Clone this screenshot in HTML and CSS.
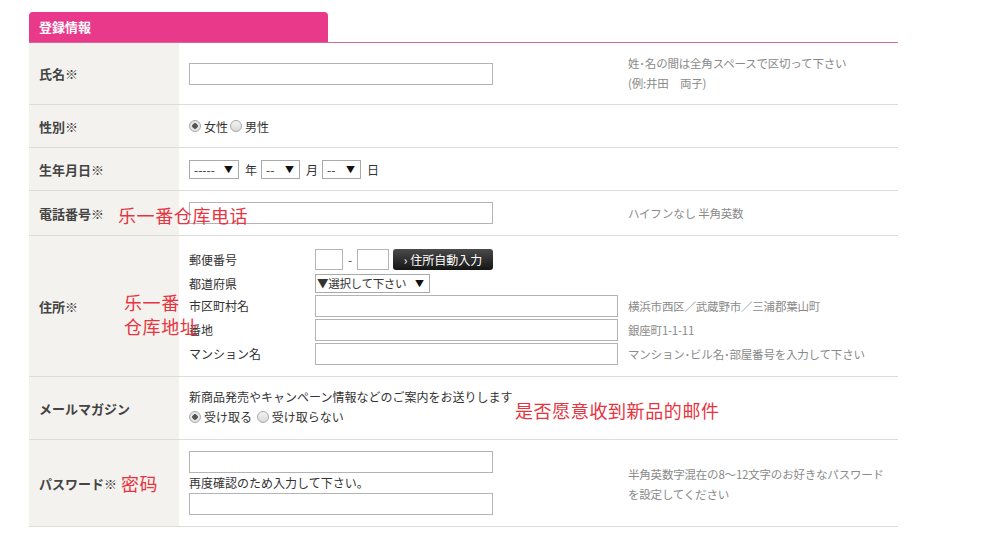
FILE: index.html
```html
<!DOCTYPE html>
<html lang="ja">

<head>
    <meta charset="UTF-8">
    <title>登録情報</title>
    <link rel="stylesheet" href="styles.css">
</head>

<body>
    <div class="form-box">
        <div class="form-head">
            <div class="form-tab">登録情報</div>
        </div>

        <div class="row row-name">
            <div class="label">氏名※</div>
            <div class="field"><input type="text" class="txt"></div>
            <div class="note">姓･名の間は全角スペースで区切って下さい<br>(例:井田　両子)</div>
        </div>

        <div class="row row-sex">
            <div class="label">性別※</div>
            <div class="field">
                <label class="radio"><input type="radio" name="sex" checked>女性</label>
                <label class="radio"><input type="radio" name="sex">男性</label>
            </div>
            <div class="note"></div>
        </div>

        <div class="row row-birth">
            <div class="label">生年月日※</div>
            <div class="field">
                <span class="sel sel-year"><select><option>-----</option></select></span>
                <span class="unit">年</span>
                <span class="sel sel-md"><select><option>--</option></select></span>
                <span class="unit">月</span>
                <span class="sel sel-md"><select><option>--</option></select></span>
                <span class="unit">日</span>
            </div>
            <div class="note"></div>
        </div>

        <div class="row row-tel">
            <div class="label">電話番号※</div>
            <div class="field"><input type="text" class="txt"></div>
            <div class="note">ハイフンなし 半角英数</div>
            <div class="memo memo-tel">乐一番仓库电话</div>
        </div>

        <div class="row row-addr">
            <div class="label">住所※</div>
            <div class="addr">
                <div class="addr-line line-zip">
                    <div class="addr-label">郵便番号</div>
                    <div class="addr-field">
                        <input type="text" class="txt zip1">
                        <span class="dash">-</span>
                        <input type="text" class="txt zip2">
                        <button class="auto-btn">› 住所自動入力</button>
                    </div>
                    <div class="note"></div>
                </div>
                <div class="addr-line line-pref">
                    <div class="addr-label">都道府県</div>
                    <div class="addr-field">
                        <span class="sel sel-pref"><select><option>▼選択して下さい</option></select></span>
                    </div>
                    <div class="note"></div>
                </div>
                <div class="addr-line">
                    <div class="addr-label">市区町村名</div>
                    <div class="addr-field"><input type="text" class="txt"></div>
                    <div class="note">横浜市西区／武蔵野市／三浦郡葉山町</div>
                </div>
                <div class="addr-line">
                    <div class="addr-label">番地</div>
                    <div class="addr-field"><input type="text" class="txt"></div>
                    <div class="note">銀座町1-1-11</div>
                </div>
                <div class="addr-line">
                    <div class="addr-label">マンション名</div>
                    <div class="addr-field"><input type="text" class="txt"></div>
                    <div class="note">マンション･ビル名･部屋番号を入力して下さい</div>
                </div>
            </div>
            <div class="memo memo-addr">乐一番<br>仓库地址</div>
        </div>

        <div class="row row-mail">
            <div class="label">メールマガジン</div>
            <div class="field field-stack">
                <div>新商品発売やキャンペーン情報などのご案内をお送りします</div>
                <div>
                    <label class="radio"><input type="radio" name="mail" checked>受け取る</label>
                    <label class="radio"><input type="radio" name="mail">受け取らない</label>
                </div>
            </div>
            <div class="note"></div>
            <div class="memo memo-mail">是否愿意收到新品的邮件</div>
        </div>

        <div class="row row-pass">
            <div class="label">パスワード※<span class="memo-inline">密码</span></div>
            <div class="field field-stack">
                <input type="password" class="txt">
                <div class="again">再度確認のため入力して下さい。</div>
                <input type="password" class="txt">
            </div>
            <div class="note">半角英数字混在の8～12文字のお好きなパスワード<br>を設定してください</div>
        </div>
    </div>
</body>

</html>
```

FILE: styles.css
```css
html,
body {
    margin: 0;
    background-color: #fff;
}

body {
    font-family: "Noto Sans CJK JP", "Noto Sans", sans-serif;
    font-size: 12px;
    color: #333;
    padding: 12px 0 0 29px;
}

.form-box {
    width: 869px;
}

.form-head {
    border-bottom: 1px solid #d9669b;
}

.form-tab {
    width: 289px;
    height: 30px;
    padding-left: 10px;
    background-color: #e9398b;
    border-radius: 4px 4px 0 0;
    color: #fff;
    font-weight: bold;
    font-size: 13px;
    line-height: 30px;
}

.row {
    position: relative;
    display: grid;
    grid-template-columns: 150px 449px 1fr;
    border-bottom: 1px solid #dcdcdc;
}

.label {
    background-color: #f3f2ee;
    padding-left: 10px;
    font-weight: bold;
    font-size: 13px;
    color: #444;
    display: flex;
    align-items: center;
}

.field {
    padding-left: 10px;
    display: flex;
    align-items: center;
}

.field-stack {
    flex-direction: column;
    align-items: flex-start;
    justify-content: center;
}

.note {
    color: #8a8a8a;
    font-size: 11.5px;
    letter-spacing: -0.2px;
    line-height: 20px;
    white-space: nowrap;
    display: flex;
    align-items: center;
}

.row-name {
    height: 61px;
}

.row-name .note {
    align-items: flex-start;
    padding-top: 10px;
}

.row-sex,
.row-birth {
    height: 42px;
}

.row-tel {
    height: 44px;
}

.row-mail {
    height: 62px;
}

.row-pass {
    height: 86px;
}

.row-pass .note {
    padding-top: 2px;
}

.txt {
    box-sizing: border-box;
    width: 304px;
    height: 22px;
    margin: 0;
    border: 1px solid #b4b4b4;
    background: #fff;
    font-size: 12px;
}

.radio {
    display: inline-flex;
    align-items: center;
    margin-right: 2px;
}

.radio input {
    appearance: none;
    width: 12px;
    height: 12px;
    margin: 0 3px 0 0;
    border: 1px solid #a8a8a8;
    border-radius: 50%;
    background: linear-gradient(#f4f4f4, #d9d9d9);
    box-sizing: border-box;
}

.radio input:checked {
    background: radial-gradient(circle, #555 0, #555 2.5px, #e6e6e6 3px);
}

.sel {
    position: relative;
    display: inline-block;
    height: 19px;
}

.sel select {
    appearance: none;
    box-sizing: border-box;
    height: 19px;
    margin: 0;
    padding: 0 0 0 4px;
    border: 1px solid #a9a9a9;
    background: #fff;
    font-family: inherit;
    font-size: 12px;
    line-height: 17px;
    color: #333;
}

.sel::after {
    content: "▼";
    position: absolute;
    right: 6px;
    top: 3px;
    font-size: 9px;
    line-height: 13px;
    color: #111;
    pointer-events: none;
}

.sel-year select {
    width: 50px;
}

.sel-md select {
    width: 39px;
}

.sel-pref select {
    width: 115px;
    padding-left: 1px;
    font-size: 11.5px;
    letter-spacing: -0.3px;
}

.unit {
    margin: 0 4px 0 6px;
    font-size: 12px;
}

.row-addr {
    grid-template-columns: 150px 1fr;
}

.addr {
    padding: 12px 0 9px 10px;
}

.addr-line {
    display: grid;
    grid-template-columns: 116px 303px 1fr;
    column-gap: 10px;
    height: 24px;
    align-items: start;
}

.addr-label,
.addr-line .note {
    display: block;
    line-height: 22px;
}

.line-zip {
    height: 25px;
    padding-top: 1px;
    box-sizing: border-box;
}

.line-pref {
    height: 22px;
}

.line-pref .addr-field {
    padding-top: 1px;
}

.addr-field {
    display: flex;
    align-items: center;
}

.zip1 {
    width: 28px;
    height: 21px;
}

.zip2 {
    width: 32px;
    height: 21px;
}

.dash {
    width: 14px;
    text-align: center;
    color: #555;
}

.auto-btn {
    margin-left: 4px;
    width: 100px;
    height: 21px;
    padding: 0;
    border: none;
    border-radius: 3px;
    background: linear-gradient(#4a4a4a, #151515);
    color: #fff;
    font-family: inherit;
    font-size: 12px;
}

.row-mail .field-stack {
    line-height: 20px;
    padding-bottom: 2px;
}

.again {
    line-height: 20px;
}

.memo {
    position: absolute;
    color: #e8343f;
    font-family: "Noto Sans CJK SC", sans-serif;
    font-size: 18px;
    letter-spacing: 0.6px;
    line-height: 24px;
}

.memo-tel {
    left: 89px;
    top: 12px;
}

.memo-addr {
    left: 95px;
    top: 54px;
}

.memo-mail {
    left: 486px;
    top: 21px;
}

.memo-inline {
    margin-left: 4px;
    color: #e8343f;
    font-family: "Noto Sans CJK SC", sans-serif;
    font-size: 18px;
    font-weight: normal;
    letter-spacing: 0.6px;
}
```
